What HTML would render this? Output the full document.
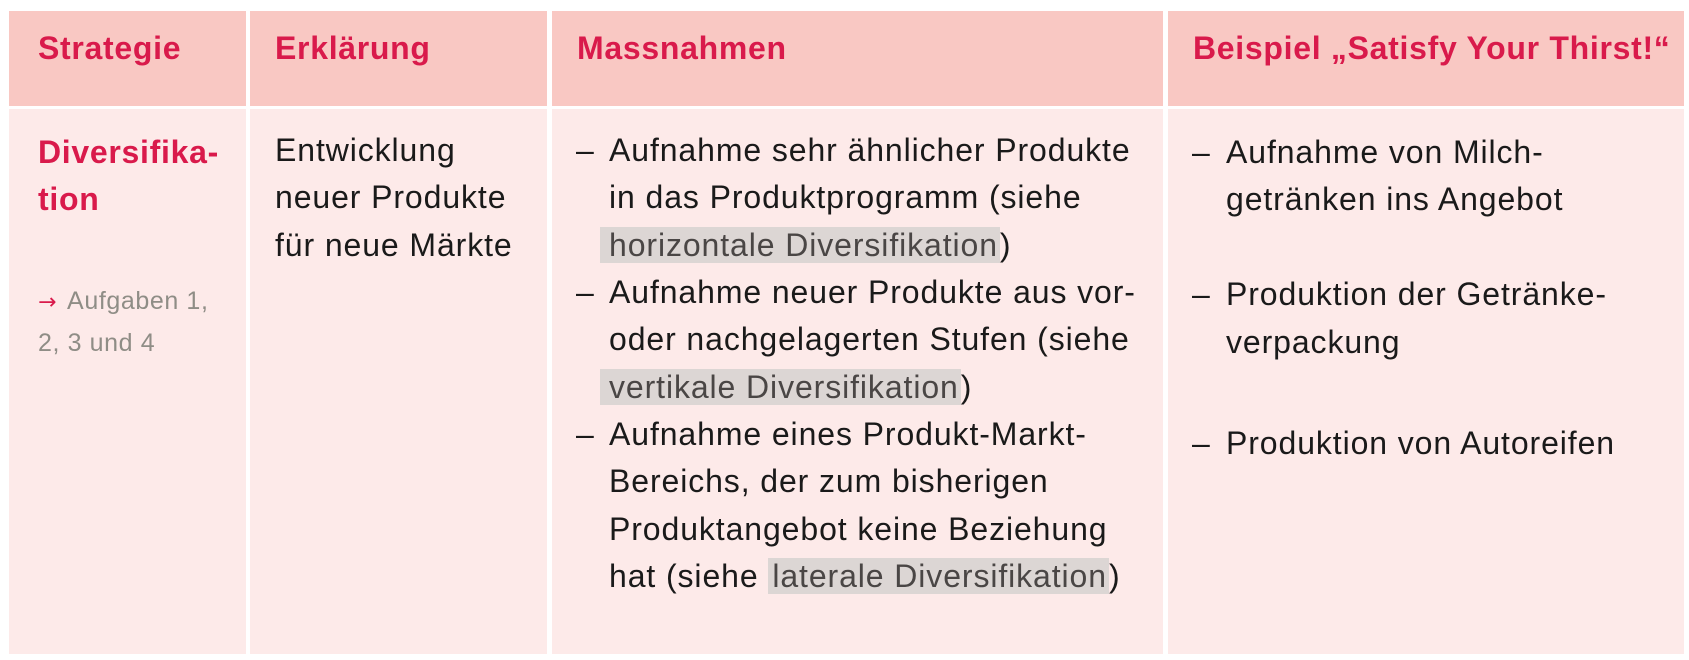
<!DOCTYPE html>
<html><head><meta charset="utf-8"><style>
html,body{margin:0;padding:0;background:#fff;}
body{width:1689px;height:660px;position:relative;overflow:hidden;font-family:"Liberation Sans",Arial,sans-serif;}
.c{position:absolute;}
.h{background:#f9c8c3;top:11px;height:95px;}
.b{background:#fdeae9;top:109px;height:545px;}
.t{position:absolute;white-space:nowrap;font-size:32px;line-height:47px;letter-spacing:0.9px;color:#1a1a1a;}
.hd{font-weight:bold;color:#d91a4b;letter-spacing:0.7px;}
.hl{background:#dcd6d4;color:#4a4645;}
.g{font-size:25px;letter-spacing:0.6px;color:#8f8d86;line-height:40px;}
</style></head><body>
<div class="c h" style="left:9px;width:237px"></div>
<div class="c h" style="left:250px;width:297px"></div>
<div class="c h" style="left:552px;width:611px"></div>
<div class="c h" style="left:1168px;width:516px"></div>
<div class="c b" style="left:9px;width:237px"></div>
<div class="c b" style="left:250px;width:297px"></div>
<div class="c b" style="left:552px;width:611px"></div>
<div class="c b" style="left:1168px;width:516px"></div>

<div class="t hd" style="left:38px;top:25px">Strategie</div>
<div class="t hd" style="left:275px;top:25px">Erklärung</div>
<div class="t hd" style="left:577px;top:25px">Massnahmen</div>
<div class="t hd" style="left:1193px;top:25px">Beispiel „Satisfy Your Thirst!“</div>

<div class="t hd" style="left:38px;top:129px">Diversifika-</div>
<div class="t hd" style="left:38px;top:176px">tion</div>
<div class="t g" style="left:38px;top:281px"><span style="color:#d91a4b;font-family:'DejaVu Sans',sans-serif;font-size:22px;margin-right:10px">→</span>Aufgaben 1,</div>
<div class="t g" style="left:38px;top:323px">2, 3 und 4</div>

<div class="t" style="left:275px;top:127px">Entwicklung</div>
<div class="t" style="left:275px;top:174px">neuer Produkte</div>
<div class="t" style="left:275px;top:222px">für neue Märkte</div>

<div class="t" style="left:576px;top:127px">–</div>
<div class="t" style="left:609px;top:127px">Aufnahme sehr ähnlicher Produkte</div>
<div class="t" style="left:609px;top:174px">in das Produktprogramm (siehe</div>
<div class="t" style="left:600px;top:222px"><span class="hl" style="padding:0 2px 0 9px">horizontale Diversifikation</span>)</div>
<div class="t" style="left:576px;top:269px">–</div>
<div class="t" style="left:609px;top:269px">Aufnahme neuer Produkte aus vor-</div>
<div class="t" style="left:609px;top:316px">oder nachgelagerten Stufen (siehe</div>
<div class="t" style="left:600px;top:364px"><span class="hl" style="padding:0 2px 0 9px">vertikale Diversifikation</span>)</div>
<div class="t" style="left:576px;top:411px">–</div>
<div class="t" style="left:609px;top:411px">Aufnahme eines Produkt-Markt-</div>
<div class="t" style="left:609px;top:458px">Bereichs, der zum bisherigen</div>
<div class="t" style="left:609px;top:506px">Produktangebot keine Beziehung</div>
<div class="t" style="left:609px;top:553px">hat (siehe <span class="hl" style="padding:0 2px 0 4px">laterale Diversifikation</span>)</div>

<div class="t" style="left:1192px;top:129px">–</div>
<div class="t" style="left:1226px;top:129px">Aufnahme von Milch-</div>
<div class="t" style="left:1226px;top:176px">getränken ins Angebot</div>
<div class="t" style="left:1192px;top:271px">–</div>
<div class="t" style="left:1226px;top:271px">Produktion der Getränke-</div>
<div class="t" style="left:1226px;top:319px">verpackung</div>
<div class="t" style="left:1192px;top:420px">–</div>
<div class="t" style="left:1226px;top:420px">Produktion von Autoreifen</div>
</body></html>
